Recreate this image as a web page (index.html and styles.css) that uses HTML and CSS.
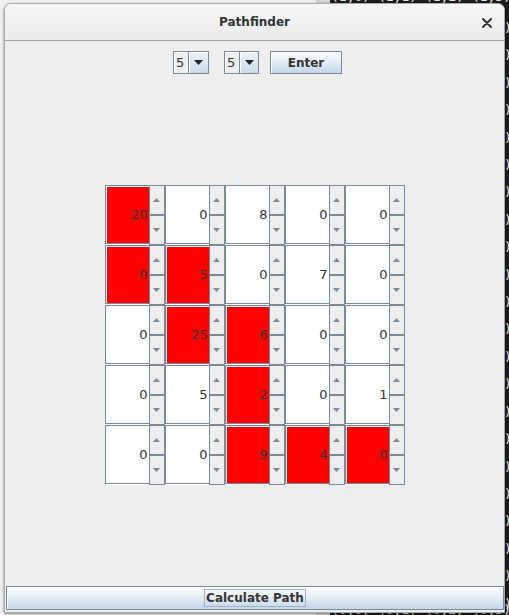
FILE: index.html
```html
<!DOCTYPE html>
<html>
<head>
<meta charset="utf-8">
<title>Pathfinder</title>
<link rel="stylesheet" href="styles.css">
</head>
<body>
<div class="desk">
  <div class="strip"></div>
  <div class="term">
    <pre class="line top">(1,0) (1,1) (1,2) (1,3)</pre>
    <pre class="line bottom">(0,0) (0,1) (0,2) (0,3)</pre>
    <pre class="edge">)
)
)
)
)
)
)
)
)
)
)
)
)
)
)
)
)
)
)
)
)
)
)</pre>
  </div>

  <div class="window">
    <div class="titlebar">
      <span class="title">Pathfinder</span>
      <svg class="close" width="10" height="10" viewBox="0 0 10 10"><path d="M1 1L9 9M9 1L1 9" stroke="#2e3436" stroke-width="2" stroke-linecap="round"/></svg>
    </div>
    <div class="content">
      <div class="controls">
        <div class="combo">
          <span class="combo-val">5</span>
          <span class="combo-btn"><svg width="9" height="5" viewBox="0 0 9 5"><path d="M0 0h9L4.5 5z" fill="#222"/></svg></span>
        </div>
        <div class="combo combo2">
          <span class="combo-val">5</span>
          <span class="combo-btn"><svg width="9" height="5" viewBox="0 0 9 5"><path d="M0 0h9L4.5 5z" fill="#222"/></svg></span>
        </div>
        <button class="btn enter">Enter</button>
      </div>

      <div class="grid-wrap">
        <div class="grid" id="grid"></div>
      </div>

      <div class="footer">
        <button class="btn calc"><span class="focus">Calculate Path</span></button>
      </div>
    </div>
  </div>
</div>
<script src="app.js"></script>
</body>
</html>
```

FILE: app.js
```js
(function () {
  var vals = [
    [20, 0, 8, 0, 0],
    [0, 5, 0, 7, 0],
    [0, 25, 6, 0, 0],
    [0, 5, 2, 0, 1],
    [0, 0, 9, 4, 0]
  ];
  var red = [
    [1, 0, 0, 0, 0],
    [1, 1, 0, 0, 0],
    [0, 1, 1, 0, 0],
    [0, 0, 1, 0, 0],
    [0, 0, 1, 1, 1]
  ];
  var up = '<svg width="7" height="4" viewBox="0 0 7 4"><path d="M0 4h7L3.5 0z" fill="#7d8c9a"/></svg>';
  var down = '<svg width="7" height="4" viewBox="0 0 7 4"><path d="M0 0h7L3.5 4z" fill="#7d8c9a"/></svg>';
  var g = document.getElementById('grid');
  var html = '';
  for (var r = 0; r < 5; r++) {
    for (var c = 0; c < 5; c++) {
      html += '<div class="spin">' +
        '<div class="field' + (red[r][c] ? ' red' : '') + '">' + vals[r][c] + '</div>' +
        '<div class="arrows"><div class="arr">' + up + '</div><div class="arr">' + down + '</div></div>' +
        '</div>';
    }
  }
  g.innerHTML = html;
})();
```

FILE: styles.css
```css
html, body {
  margin: 0;
  padding: 0;
}
body {
  width: 509px;
  height: 615px;
  overflow: hidden;
  background: #f0f0f0;
  font-family: "DejaVu Sans", sans-serif;
}
.desk {
  position: relative;
  width: 509px;
  height: 615px;
  overflow: hidden;
}
.strip {
  position: absolute;
  left: 316px;
  top: 0;
  width: 14px;
  height: 615px;
  background: #d4d4d4;
}
.term {
  position: absolute;
  left: 330px;
  top: 0;
  width: 179px;
  height: 615px;
  background: #1c1c1c;
  overflow: hidden;
}
.term pre {
  margin: 0;
  position: absolute;
  font-family: "DejaVu Sans Mono", monospace;
  font-size: 13px;
  line-height: 16px;
  color: #e4e4e4;
}
.line {
  left: 1px;
}
.line.top {
  top: -11px;
}
.line.bottom {
  top: 602px;
}
.edge {
  left: 174px;
  top: 14px;
  line-height: 27.4px !important;
}
.window {
  position: absolute;
  left: 4px;
  top: 3px;
  width: 501px;
  height: 610px;
  box-sizing: border-box;
  border: 1px solid #a9a9a9;
  border-radius: 7px 7px 0 0;
  background: #eeeeee;
  box-shadow: 0 1px 3px rgba(0, 0, 0, 0.45);
  display: flex;
  flex-direction: column;
  overflow: hidden;
}
.titlebar {
  height: 36px;
  flex: none;
  border-bottom: 1px solid #a0a0a0;
  background: linear-gradient(#f6f6f6, #ececec);
  display: flex;
  align-items: center;
  justify-content: center;
  position: relative;
}
.title {
  font-weight: bold;
  font-size: 12px;
  color: #2e3436;
}
.close {
  position: absolute;
  right: 12px;
  top: 14px;
}
.content {
  flex: 1;
  display: flex;
  flex-direction: column;
}
.controls {
  margin-top: 10px;
  display: flex;
  justify-content: center;
  padding-left: 6px;
  height: 23px;
}
.combo {
  display: flex;
  width: 36px;
  height: 23px;
  box-sizing: border-box;
  border: 1px solid #7a8a99;
  background: #eeeeee;
}
.combo2 {
  width: 35px;
  margin-left: 15px;
}
.combo-val {
  width: 15px;
  box-sizing: border-box;
  border-right: 1px solid #7a8a99;
  box-shadow: inset 1px 1px #fff;
  font-size: 13px;
  color: #333;
  display: flex;
  align-items: center;
  padding-left: 2px;
}
.combo-btn {
  flex: 1;
  display: flex;
  align-items: center;
  justify-content: center;
  background: linear-gradient(#eef3f8, #c9dbec);
  box-shadow: inset 1px 1px #fff;
}
.btn {
  font-family: "DejaVu Sans", sans-serif;
  font-weight: bold;
  font-size: 12px;
  color: #333;
  border: 1px solid #7a8a99;
  background: linear-gradient(#fbfdfe 0%, #e6eef6 45%, #c3d6e9 100%);
  box-shadow: inset 1px 1px #fff;
  padding: 0;
  margin: 0;
}
.enter {
  width: 72px;
  height: 23px;
  margin-left: 11px;
}
.grid-wrap {
  margin-top: 111px;
  display: flex;
  justify-content: center;
}
.grid {
  display: grid;
  grid-template-columns: repeat(5, 60px);
  grid-template-rows: repeat(5, 60px);
}
.spin {
  display: flex;
  width: 60px;
  height: 60px;
}
.field {
  width: 44px;
  height: 59px;
  box-sizing: border-box;
  border: 1px solid #7a8a99;
  border-right: none;
  background: #fff;
  box-shadow: inset 1px 1px #fff, 0 1px 0 #fff;
  display: flex;
  align-items: center;
  justify-content: flex-end;
  padding-right: 1px;
  font-size: 13px;
  color: #333;
}
.field.red {
  background: #ff0000;
}
.arrows {
  width: 16px;
  height: 60px;
  display: flex;
  flex-direction: column;
}
.arr {
  flex: 1;
  box-sizing: border-box;
  border: 1px solid #7a8a99;
  background: #eeeeee;
  display: flex;
  align-items: center;
  justify-content: center;
}
.footer {
  margin-top: auto;
  padding: 0 0 2px 1px;
}
.calc {
  display: flex;
  align-items: center;
  justify-content: center;
  width: 498px;
  height: 24px;
}
.focus {
  border: 1px solid #9fb3c7;
  padding: 1px;
  line-height: 14px;
}
```
